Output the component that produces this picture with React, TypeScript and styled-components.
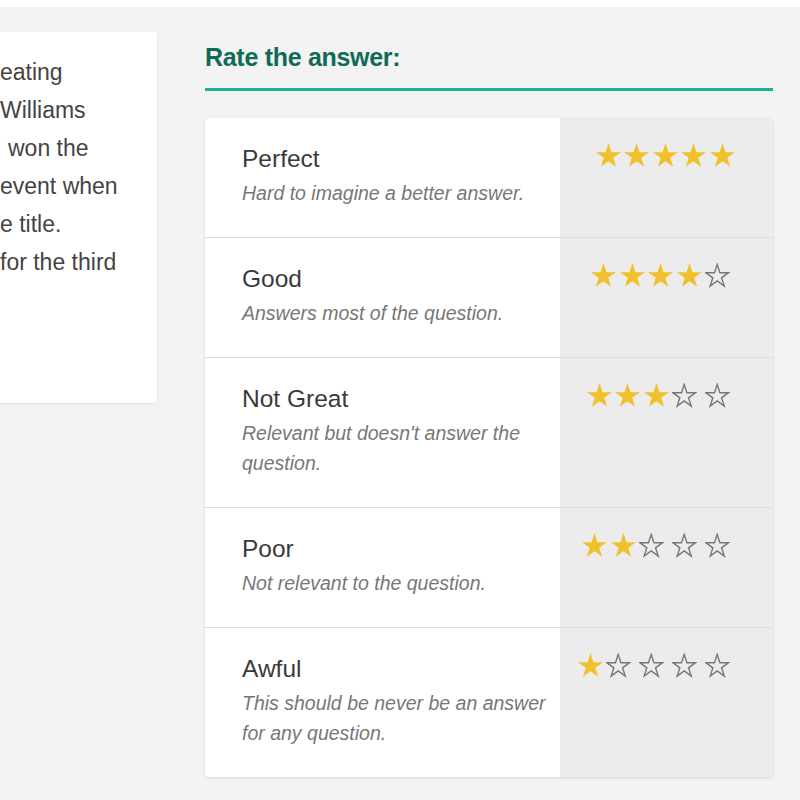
import React from "react";
import styled, { createGlobalStyle } from "styled-components";

const GlobalStyle = createGlobalStyle`
  html, body { margin: 0; padding: 0; background: #ffffff; }
  body { font-family: "Liberation Sans", Arial, Helvetica, sans-serif; overflow: hidden; }
`;

const Page = styled.div`
  margin-top: 7px;
  background: #f3f3f3;
  min-height: 793px;
  display: flex;
  align-items: flex-start;
  padding-top: 25px;
  box-sizing: border-box;
`;

const StoryCard = styled.div`
  flex: none;
  margin-left: -40px;
  width: 197px;
  height: 371px;
  box-sizing: border-box;
  padding: 21px 0 0 40px;
  background: #ffffff;
  border-radius: 4px;
  box-shadow: 0 1px 2px rgba(0, 0, 0, 0.08);
  overflow: hidden;
`;

const StoryLine = styled.div<{ $shift: number }>`
  font-size: 23px;
  line-height: 38px;
  color: #444444;
  white-space: nowrap;
  margin-left: ${(p) => p.$shift}px;
`;

const RatePanel = styled.section`
  flex: none;
  width: 568px;
  margin-left: 48px;
`;

const Heading = styled.h2`
  margin: 10px 0 0;
  font-size: 25px;
  line-height: 30px;
  font-weight: 700;
  color: #0f6b56;
  letter-spacing: -0.3px;
  padding-bottom: 16px;
  border-bottom: 3px solid #1ab394;
`;

const RatingCard = styled.div`
  margin-top: 27px;
  background: #ffffff;
  border-radius: 4px;
  overflow: hidden;
  box-shadow: 0 1px 3px rgba(0, 0, 0, 0.12);
`;

const RatingRow = styled.div`
  display: grid;
  grid-template-columns: 355px 213px;
  border-bottom: 1px solid #dddddd;
  &:last-child { border-bottom: none; }
`;

const LabelCell = styled.div`
  padding: 25px 8px 29px 37px;
`;

const Title = styled.div`
  font-size: 24.5px;
  line-height: 32px;
  color: #3a3a3a;
`;

const Description = styled.div`
  margin-top: 3px;
  font-size: 19.5px;
  line-height: 30px;
  font-style: italic;
  color: #777777;
`;

const StarCell = styled.div`
  background: #ececec;
  display: flex;
  justify-content: flex-end;
  align-items: flex-start;
  padding: 25px 35px 0 0;
`;

const StarSlot = styled.span<{ $filled: boolean }>`
  display: inline-flex;
  flex: none;
  width: ${(p) => (p.$filled ? 28.5 : 33)}px;
  height: 25px;
`;

function starPoints(cx: number, cy: number, R: number) {
  const r = R * 0.382;
  const pts: string[] = [];
  for (let i = 0; i < 10; i++) {
    const rad = i % 2 === 0 ? R : r;
    const a = (-90 + i * 36) * (Math.PI / 180);
    pts.push(`${(cx + rad * Math.cos(a)).toFixed(2)},${(cy + rad * Math.sin(a)).toFixed(2)}`);
  }
  return pts.join(" ");
}

const Star: React.FC<{ filled: boolean }> = ({ filled }) => (
  <StarSlot $filled={filled}>
    {filled ? (
      <svg width="25" height="25" viewBox="0 0 25 25">
        <polygon points={starPoints(12.5, 13.2, 13.1)} fill="#f1c12c" />
      </svg>
    ) : (
      <svg width="25" height="25" viewBox="0 0 25 25">
        <polygon
          points={starPoints(12.2, 13.4, 12)}
          fill="none"
          stroke="#777777"
          strokeWidth="1.4"
          strokeLinejoin="miter"
        />
      </svg>
    )}
  </StarSlot>
);

const ratings = [
  { title: "Perfect", desc: "Hard to imagine a better answer.", stars: 5 },
  { title: "Good", desc: "Answers most of the question.", stars: 4 },
  { title: "Not Great", desc: "Relevant but doesn't answer the question.", stars: 3 },
  { title: "Poor", desc: "Not relevant to the question.", stars: 2 },
  { title: "Awful", desc: "This should be never be an answer for any question.", stars: 1 },
];

const storyLines = [
  { text: "eating", shift: 0 },
  { text: "Williams", shift: 0 },
  { text: "won the", shift: 8 },
  { text: "event when", shift: 0 },
  { text: "e title.", shift: 0 },
  { text: "for the third", shift: 0 },
];

export default function App() {
  return (
    <>
      <GlobalStyle />
      <Page>
        <StoryCard>
          {storyLines.map((l, i) => (
            <StoryLine key={i} $shift={l.shift}>
              {l.text}
            </StoryLine>
          ))}
        </StoryCard>
        <RatePanel>
          <Heading>Rate the answer:</Heading>
          <RatingCard>
            {ratings.map((r) => (
              <RatingRow key={r.title}>
                <LabelCell>
                  <Title>{r.title}</Title>
                  <Description>{r.desc}</Description>
                </LabelCell>
                <StarCell>
                  {[1, 2, 3, 4, 5].map((n) => (
                    <Star key={n} filled={n <= r.stars} />
                  ))}
                </StarCell>
              </RatingRow>
            ))}
          </RatingCard>
        </RatePanel>
      </Page>
    </>
  );
}
